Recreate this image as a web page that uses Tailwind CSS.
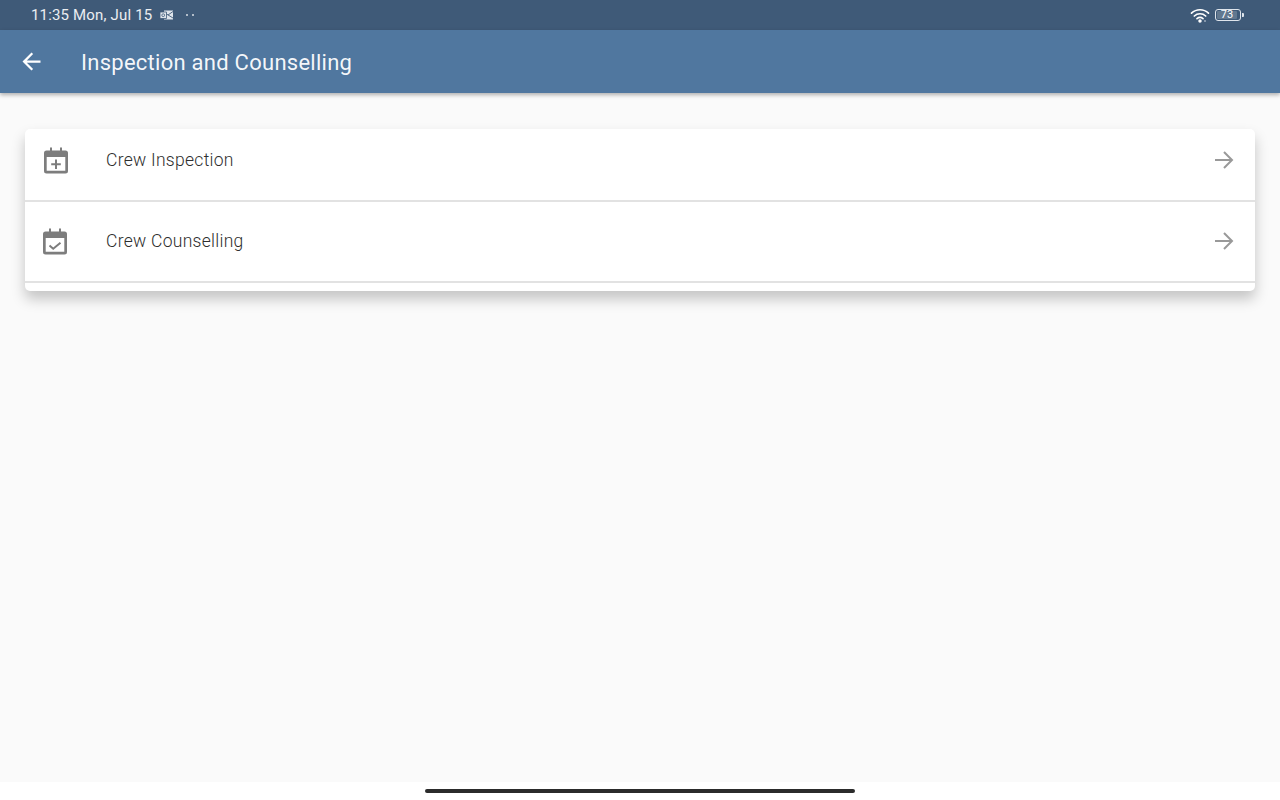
<!DOCTYPE html>
<html>
<head>
<meta charset="utf-8">
<script src="https://cdn.jsdelivr.net/npm/@tailwindcss/browser@4"></script>
</head>
<body class="m-0 bg-white">
<div class="w-[1280px] h-[800px] overflow-hidden flex flex-col bg-white font-['Roboto',sans-serif]">
  <div class="h-[30px] shrink-0 bg-[#3f5a78] flex items-center pl-[31px] pr-[36px] text-white">
    <span class="text-[15px] leading-none tracking-[0.17px] text-white/90">11:35 Mon, Jul 15</span>
    <svg class="ml-[7px]" width="15" height="12" viewBox="0 0 15 12"><path d="M5 1.500h9v9H5z" fill="#dfe5ec"/><path d="M1 3h6.500v6.500H1z" fill="#dfe5ec" stroke="#3f5a78" stroke-width=".8"/><path d="M7.500 5l6.500 4M14 2.500L9 6" fill="none" stroke="#3f5a78" stroke-width=".9"/><circle cx="4.200" cy="6.200" r="1.400" fill="none" stroke="#3f5a78" stroke-width=".8"/></svg>
    <span class="ml-[12px] flex gap-[4px]"><i class="block w-[2px] h-[2px] rounded-full bg-white/80"></i><i class="block w-[2px] h-[2px] rounded-full bg-white/80"></i></span>
    <div class="ml-auto flex items-center gap-[5px]">
      <svg width="20" height="16" viewBox="0 0 20 16" fill="none" stroke="#fff" stroke-width="1.700" stroke-linecap="round"><path d="M1.500 6.200C6.300 1.600 13.700 1.600 18.500 6.200"/><path d="M4.300 9C7.500 6 12.500 6 15.700 9"/><path d="M7 11.700c1.800-1.500 4.200-1.500 6 0"/><circle cx="10" cy="14" r=".9" fill="#fff"/><circle cx="15" cy="14" r=".8" fill="#dfe5ec" stroke="none"/></svg>
      <div class="flex items-center">
        <div class="w-[26px] h-[12px] rounded-[3px] border border-[#dfe5ec] flex items-stretch p-[1px]">
          <div class="w-[20px] rounded-[1px] bg-[#62788f] text-white text-[11px] leading-[8px] text-center">73</div>
        </div>
        <div class="w-[2px] h-[4px] bg-[#dfe5ec] rounded-r-[1px] ml-[1px]"></div>
      </div>
    </div>
  </div>
  <div class="h-[63px] shrink-0 bg-[#50779f] flex items-center pl-[18px] text-white shadow-[0_2px_4px_rgba(0,0,0,0.3)] relative">
    <svg width="27" height="27" viewBox="0 0 24 24" fill="#fff"><path d="M20 11H7.830l5.590-5.590L12 4l-8 8 8 8 1.410-1.410L7.830 13H20v-2z"/></svg>
    <span class="ml-[36px] pt-[2px] text-[22px] leading-none tracking-[0.26px] text-white/95">Inspection and Counselling</span>
  </div>
  <div class="h-[689px] shrink-0 bg-[#fafafa] pt-[36px] px-[25px]">
    <div class="w-[1230px] h-[162px] bg-white rounded-[5px] shadow-[0_8px_14px_rgba(0,0,0,0.22)] overflow-hidden">
      <div class="h-[73px] border-b-2 border-[#e2e2e2] flex items-center pb-[10px] pl-[19px] pr-[21px]">
        <svg width="24" height="28" viewBox="0 0 24 28" fill="#7d7d7d"><path fill-rule="evenodd" d="M2.500 4.500H6V1.500h2v3h8V1.500h2v3h3.500a2.500 2.500 0 0 1 2.500 2.500v18a2.500 2.500 0 0 1-2.500 2.500h-19A2.500 2.500 0 0 1 0 25V7a2.500 2.500 0 0 1 2.500-2.500zM2.700 11V24.800h18.600V11z"/><path d="M11 13.500h2v3.800h3.800v2H13v3.800h-2v-3.800H7.200v-2H11z"/></svg>
        <span class="ml-[38px] pt-[2px] text-[17.500px] leading-none text-[#2e2e2e] font-light tracking-[0.28px]">Crew Inspection</span>
        <svg class="ml-auto" width="20" height="20" viewBox="0 0 20 20" fill="none" stroke="#999" stroke-width="2"><path d="M1 10h17M10 2l8 8-8 8"/></svg>
      </div>
      <div class="h-[81px] border-b-2 border-[#e2e2e2] flex items-center pl-[18px] pr-[21px]">
        <svg class="mt-[-2px]" width="24" height="28" viewBox="0 0 24 28" fill="#7d7d7d"><path fill-rule="evenodd" d="M2.500 4.500H6V1.500h2v3h8V1.500h2v3h3.500a2.500 2.500 0 0 1 2.500 2.500v18a2.500 2.500 0 0 1-2.500 2.500h-19A2.500 2.500 0 0 1 0 25V7a2.500 2.500 0 0 1 2.500-2.500zM2.700 11V24.800h18.600V11z"/><path d="M6.500 18.500l3.700 3.300 7.300-6" fill="none" stroke="#7d7d7d" stroke-width="2"/></svg>
        <span class="ml-[39px] text-[17.500px] leading-none text-[#2e2e2e] font-light tracking-[0.28px]">Crew Counselling</span>
        <svg class="ml-auto mt-[-2px]" width="20" height="20" viewBox="0 0 20 20" fill="none" stroke="#999" stroke-width="2"><path d="M1 10h17M10 2l8 8-8 8"/></svg>
      </div>
    </div>
  </div>
  <div class="flex-1 bg-white flex justify-center pt-[7px]">
    <div class="w-[430px] h-[4px] rounded-full bg-[#2b2b2b]"></div>
  </div>
</div>
</body>
</html>
